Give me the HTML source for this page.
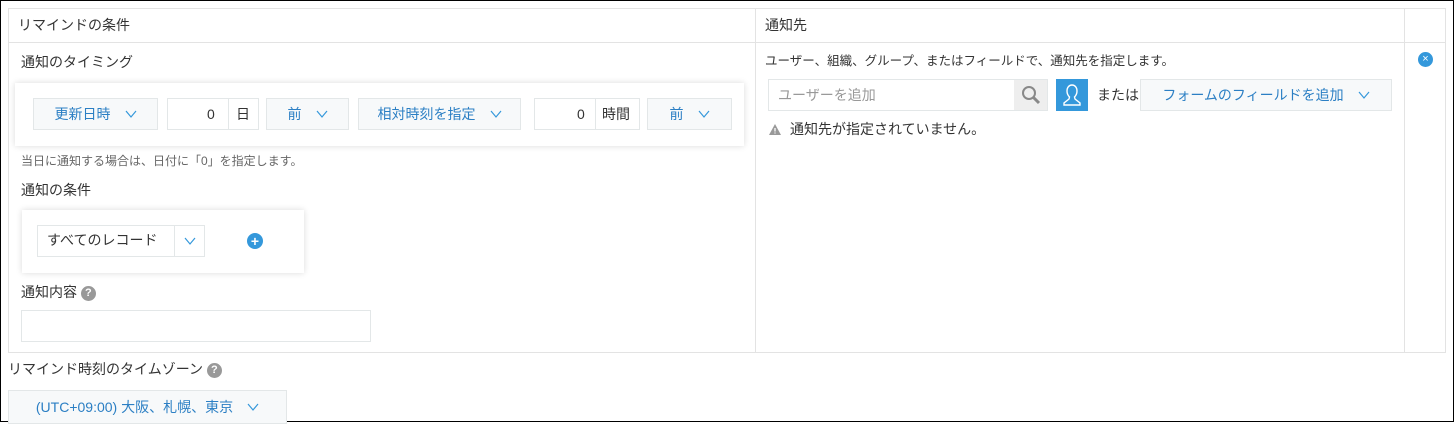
<!DOCTYPE html><html><head><meta charset="utf-8"><style>
*{box-sizing:border-box;margin:0;padding:0}
body{width:1454px;height:422px;background:#fff;font-family:"Liberation Sans","Noto Sans CJK JP",sans-serif;color:#333;font-size:14px;position:relative;overflow:hidden}
.a{position:absolute}
.t{white-space:nowrap;line-height:1}
.btn{position:absolute;background:#f7f9fa;border:1px solid #e3e7e8;color:#2b7fc4;font-size:14px;display:flex;align-items:center;justify-content:center;gap:14px;white-space:nowrap}
.inp{position:absolute;background:#fff;border:1px solid #e3e7e8}
.chev{width:12px;height:8px}
.q{display:inline-block;width:15px;height:15px;border-radius:50%;background:#999;color:#fff;font-size:11px;font-weight:bold;text-align:center;line-height:15px;vertical-align:middle}
</style></head><body>
<svg width="0" height="0" style="position:absolute"><defs><symbol id="cv" viewBox="0 0 12 8"><path d="M1 1l5 6 5-6" fill="none" stroke="#3498db" stroke-width="1.2"/></symbol></defs></svg>
<div class="a" style="left:0;top:0;width:1454px;height:422px;border:1px solid #000"></div>
<!-- table -->
<div class="a" style="left:8px;top:8px;width:1438px;height:345px;border:1px solid #e3e3e3"></div>
<div class="a" style="left:8px;top:42px;width:1438px;height:1px;background:#e3e3e3"></div>
<div class="a" style="left:755px;top:8px;width:1px;height:345px;background:#e3e3e3"></div>
<div class="a" style="left:1404px;top:8px;width:1px;height:345px;background:#e3e3e3"></div>
<div class="a t" style="left:18px;top:18px">リマインドの条件</div>
<div class="a t" style="left:765px;top:18px">通知先</div>
<div class="a t" style="left:21px;top:55px">通知のタイミング</div>
<div class="a" style="left:15px;top:83px;width:729px;height:63px;background:#fff;box-shadow:0 0 6px rgba(0,0,0,.15)"></div>
<div class="btn" style="left:33px;top:98px;width:125px;height:32px">更新日時<svg class="chev"><use href="#cv"/></svg></div>
<div class="inp" style="left:167px;top:98px;width:92px;height:32px"></div>
<div class="a" style="left:228px;top:98px;width:1px;height:32px;background:#e3e7e8"></div>
<div class="a t" style="left:207px;top:107px">0</div><div class="a t" style="left:236px;top:107px">日</div>
<div class="btn" style="left:266px;top:98px;width:83px;height:32px">前<svg class="chev"><use href="#cv"/></svg></div>
<div class="btn" style="left:358px;top:98px;width:163px;height:32px">相対時刻を指定<svg class="chev"><use href="#cv"/></svg></div>
<div class="inp" style="left:534px;top:98px;width:106px;height:32px"></div>
<div class="a" style="left:595px;top:98px;width:1px;height:32px;background:#e3e7e8"></div>
<div class="a t" style="left:577px;top:107px">0</div><div class="a t" style="left:602px;top:107px">時間</div>
<div class="btn" style="left:647px;top:98px;width:85px;height:32px">前<svg class="chev"><use href="#cv"/></svg></div>
<div class="a t" style="left:21px;top:155px;font-size:12px;color:#666">当日に通知する場合は、日付に「0」を指定します。</div>
<div class="a t" style="left:21px;top:183px">通知の条件</div>
<div class="a" style="left:22px;top:210px;width:282px;height:63px;background:#fff;box-shadow:0 0 6px rgba(0,0,0,.15)"></div>
<div class="inp" style="left:37px;top:225px;width:168px;height:32px"></div>
<div class="a" style="left:174px;top:225px;width:1px;height:32px;background:#e3e7e8"></div>
<div class="a t" style="left:47px;top:233px">すべてのレコード</div>
<svg class="a" style="left:184px;top:237px" width="12" height="8"><use href="#cv"/></svg>
<div class="a" style="left:247px;top:233px;width:16px;height:16px;border-radius:50%;background:#3498db;color:#fff;font-size:14px;font-weight:bold;text-align:center;line-height:16px">+</div>
<div class="a t" style="left:21px;top:285px">通知内容 <span class="q">?</span></div>
<div class="inp" style="left:21px;top:310px;width:350px;height:32px"></div>
<div class="a t" style="left:8px;top:362px">リマインド時刻のタイムゾーン <span class="q">?</span></div>
<div class="btn" style="left:8px;top:390px;width:279px;height:34px">(UTC+09:00) 大阪、札幌、東京<svg class="chev"><use href="#cv"/></svg></div>
<!-- right -->
<div class="a t" style="left:765px;top:55px;font-size:12.5px">ユーザー、組織、グループ、またはフィールドで、通知先を指定します。</div>
<div class="inp" style="left:768px;top:79px;width:280px;height:32px"></div>
<div class="a" style="left:1014px;top:80px;width:33px;height:30px;background:#eee"></div>
<svg class="a" style="left:1021px;top:85px" width="20" height="20"><circle cx="8" cy="8" r="6" fill="none" stroke="#888" stroke-width="2"/><path d="M12 12l6 6" stroke="#888" stroke-width="3"/></svg>
<div class="a t" style="left:778px;top:88px;color:#999">ユーザーを追加</div>
<div class="a" style="left:1056px;top:79px;width:32px;height:32px;background:#3498db"></div>
<svg class="a" style="left:1056px;top:79px" width="32" height="32"><path d="M16 6c-3 0-5 2.5-5 6s1.5 5 2.5 6l-.5 2-5 4v2h16v-2l-5-4-.5-2c1-1 2.5-2.5 2.5-6s-2-6-5-6z" fill="none" stroke="#fff" stroke-width="1.4"/></svg>
<div class="a t" style="left:1097px;top:88px">または</div>
<div class="btn" style="left:1140px;top:79px;width:252px;height:32px">フォームのフィールドを追加<svg class="chev"><use href="#cv"/></svg></div>
<svg class="a" style="left:769px;top:124px" width="12" height="11"><path d="M6 0L12 11H0z" fill="#999"/><path d="M6 4v3.5M6 8.5v1" stroke="#fff" stroke-width="1.3"/></svg>
<div class="a t" style="left:790px;top:122px">通知先が指定されていません。</div>
<div class="a" style="left:1418px;top:52px;width:15px;height:15px;border-radius:50%;background:#3498db;color:#fff;font-size:11px;text-align:center;line-height:14px">×</div>
</body></html>
